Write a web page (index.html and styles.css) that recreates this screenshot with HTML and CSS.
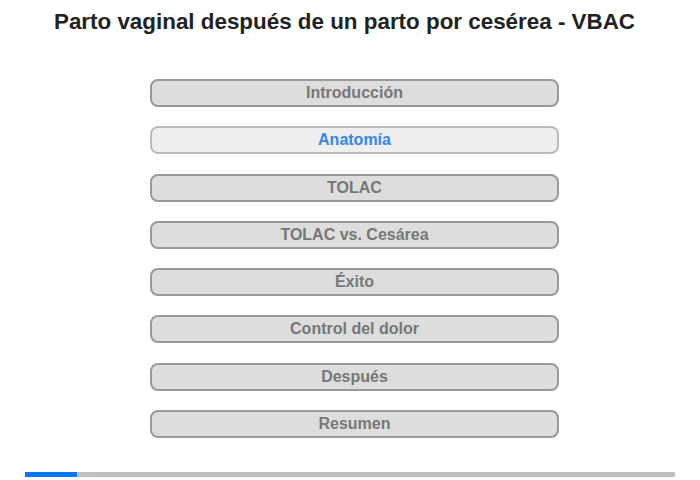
FILE: index.html
```html
<!DOCTYPE html>
<html lang="es">
<head>
<meta charset="utf-8">
<link rel="stylesheet" href="styles.css">
</head>
<body>
<div class="page">
  <h1 class="title">Parto vaginal después de un parto por cesérea - VBAC</h1>
  <nav class="menu">
    <div class="item">Introducción</div>
    <div class="item active">Anatomía</div>
    <div class="item">TOLAC</div>
    <div class="item">TOLAC vs. Cesárea</div>
    <div class="item">Éxito</div>
    <div class="item">Control del dolor</div>
    <div class="item">Después</div>
    <div class="item">Resumen</div>
  </nav>
  <div class="progress"><div class="progress-fill" style="width:8%"></div></div>
</div>
</body>
</html>
```
FILE: styles.css
```css
html, body {
  margin: 0;
  padding: 0;
  background: #fff;
  font-family: "Liberation Sans", Arial, sans-serif;
}
.page {
  width: 700px;
  height: 480px;
  display: flex;
  flex-direction: column;
  align-items: center;
}
.title {
  margin: 9px 0 0;
  padding-right: 11px;
  font-size: 22.4px;
  font-weight: bold;
  color: #222;
  line-height: 26px;
  text-align: center;
}
.menu {
  margin-top: 44px;
  margin-left: 9px;
  display: flex;
  flex-direction: column;
  gap: 19.3px;
}
.item {
  width: 405px;
  height: 24px;
  line-height: 24px;
  border: 2px solid #999;
  border-radius: 8px;
  background: #ddd;
  color: #777;
  font-size: 16px;
  font-weight: bold;
  text-align: center;
}
.item.active {
  background: #eee;
  border-color: #bbb;
  color: #3388ee;
}
.progress {
  margin-top: auto;
  margin-bottom: 3px;
  width: 650px;
  height: 5px;
  background: #c0c0c0;
}
.progress-fill {
  height: 100%;
  background: #0077ff;
}
```
